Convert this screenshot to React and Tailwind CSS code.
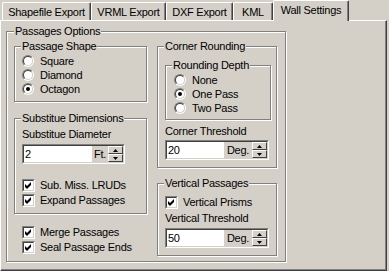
import React from "react";

const etched =
  "border border-[#808080] shadow-[inset_1px_1px_0_#fff,1px_1px_0_#fff]";

function Group({ title, className = "", legendClass = "ml-[6px]", children }) {
  return (
    <fieldset className={`m-0 p-0 min-w-0 ${etched} ${className}`}>
      <legend className={`${legendClass} px-px bg-[#d4d0c8] leading-[13px]`}>
        {title}
      </legend>
      {children}
    </fieldset>
  );
}

function Radio({ checked, label }) {
  return (
    <div className="flex items-center h-[14px] gap-[6px]">
      <div className="w-[12px] h-[12px] rounded-full border border-t-[#808080] border-l-[#808080] border-b-white border-r-white">
        <div className="w-full h-full rounded-full border border-t-[#404040] border-l-[#404040] border-b-[#d4d0c8] border-r-[#d4d0c8] bg-white flex items-center justify-center">
          {checked && <div className="w-[4px] h-[4px] rounded-full bg-black" />}
        </div>
      </div>
      <span>{label}</span>
    </div>
  );
}

function Check({ label }) {
  return (
    <div className="flex items-center h-[15px] gap-[5px]">
      <div className="w-[13px] h-[13px] border border-t-[#808080] border-l-[#808080] border-b-white border-r-white">
        <div className="w-full h-full border border-t-[#404040] border-l-[#404040] border-b-[#d4d0c8] border-r-[#d4d0c8] bg-white flex items-center justify-center">
          <svg width="7" height="7" viewBox="0 0 7 7">
            <path d="M0 2 L2 4 L6 0 L6 3 L2 7 L0 5 Z" fill="#000" />
          </svg>
        </div>
      </div>
      <span>{label}</span>
    </div>
  );
}

function SpinBtn({ up }) {
  return (
    <div className="h-[8px] flex items-center justify-center border border-t-white border-l-white border-b-[#404040] border-r-[#404040] bg-[#d4d0c8]">
      <svg width="5" height="3" viewBox="0 0 5 3">
        {up ? (
          <path d="M2.5 0 L5 3 L0 3 Z" fill="#000" />
        ) : (
          <path d="M0 0 L5 0 L2.5 3 Z" fill="#000" />
        )}
      </svg>
    </div>
  );
}

function Spin({ className = "", value, unit, unitW }) {
  return (
    <div
      className={`h-[20px] border border-t-[#808080] border-l-[#808080] border-b-white border-r-white ${className}`}
    >
      <div className="h-full flex border border-t-[#404040] border-l-[#404040] border-b-[#d4d0c8] border-r-[#d4d0c8]">
        <div className="flex-1 bg-white pl-px flex items-center">{value}</div>
        <div className={`${unitW} flex items-center justify-center bg-[#d4d0c8]`}>
          {unit}
        </div>
        <div className="w-[15px] flex flex-col">
          <SpinBtn up />
          <SpinBtn />
        </div>
      </div>
    </div>
  );
}

function Tab({ w, children }) {
  return (
    <div
      className={`${w} h-[18px] border-t border-l border-r border-t-white border-l-white border-r-[#404040] shadow-[inset_-1px_0_0_#808080] rounded-t-[2px] text-center pt-[3px] whitespace-nowrap`}
    >
      {children}
    </div>
  );
}

function SelTab({ w, children }) {
  return (
    <div
      className={`${w} relative z-10 h-[21px] -mb-px bg-[#d4d0c8] border-t border-l border-r border-t-white border-l-white border-r-[#404040] shadow-[inset_-1px_0_0_#808080] rounded-t-[2px] text-center pt-[3px] whitespace-nowrap`}
    >
      {children}
    </div>
  );
}

export default function App() {
  return (
    <div className="w-[389px] h-[271px] bg-[#d4d0c8] overflow-hidden text-black text-[11px] leading-[13px] tracking-[-0.25px] font-['Liberation_Sans',Arial,sans-serif]">
      <div className="flex items-end h-[20px] pl-[2px]">
        <Tab w="w-[89px]">Shapefile Export</Tab>
        <Tab w="w-[75px]">VRML Export</Tab>
        <Tab w="w-[67px]">DXF Export</Tab>
        <Tab w="w-[40px]">KML</Tab>
        <SelTab w="w-[76px]">Wall Settings</SelTab>
      </div>
      <div className="w-[387px] h-[251px] border border-t-white border-l-white border-r-[#404040] border-b-[#404040] shadow-[inset_-1px_-1px_0_#808080] pl-[5px] pt-[4px]">
        <Group
          title="Passages Options"
          legendClass="ml-[7px]"
          className="w-[280px] h-[237px]"
        >
          <div className="flex pl-[7px] pt-[2px] gap-[10px]">
            <div className="w-[133px] flex flex-col">
              <Group title="Passage Shape" className="w-[133px]">
                <div className="pl-[7px] pt-px pb-[5px]">
                  <Radio label="Square" />
                  <Radio label="Diamond" />
                  <Radio label="Octagon" checked />
                </div>
              </Group>
              <Group title="Substitue Dimensions" className="w-[133px] mt-[10px]">
                <div className="pl-[7px] pb-[5px]">
                  <div className="mt-[3px]">Substitue Diameter</div>
                  <Spin className="mt-[3px] w-[103px]" value="2" unit="Ft." unitW="w-[16px]" />
                  <div className="mt-[14px]">
                    <Check label="Sub. Miss. LRUDs" />
                    <Check label="Expand Passages" />
                  </div>
                </div>
              </Group>
              <div className="mt-[11px] ml-[8px]">
                <Check label="Merge Passages" />
                <Check label="Seal Passage Ends" />
              </div>
            </div>
            <div className="w-[120px] flex flex-col">
              <Group title="Corner Rounding" className="w-[120px]">
                <div className="pl-[7px] pb-[7px]">
                  <Group title="Rounding Depth" className="w-[106px] mt-[6px]">
                    <div className="pl-[8px] pt-px pb-[4px]">
                      <Radio label="None" />
                      <Radio label="One Pass" checked />
                      <Radio label="Two Pass" />
                    </div>
                  </Group>
                  <div className="mt-[5px]">Corner Threshold</div>
                  <Spin className="mt-[2px] w-[104px]" value="20" unit="Deg." unitW="w-[28px]" />
                </div>
              </Group>
              <Group title="Vertical Passages" className="w-[120px] mt-[9px]">
                <div className="pl-[7px] pt-[5px] pb-[7px]">
                  <Check label="Vertical Prisms" />
                  <div className="mt-[2px]">Vertical Threshold</div>
                  <Spin className="mt-[3px] w-[104px]" value="50" unit="Deg." unitW="w-[28px]" />
                </div>
              </Group>
            </div>
          </div>
        </Group>
      </div>
    </div>
  );
}
